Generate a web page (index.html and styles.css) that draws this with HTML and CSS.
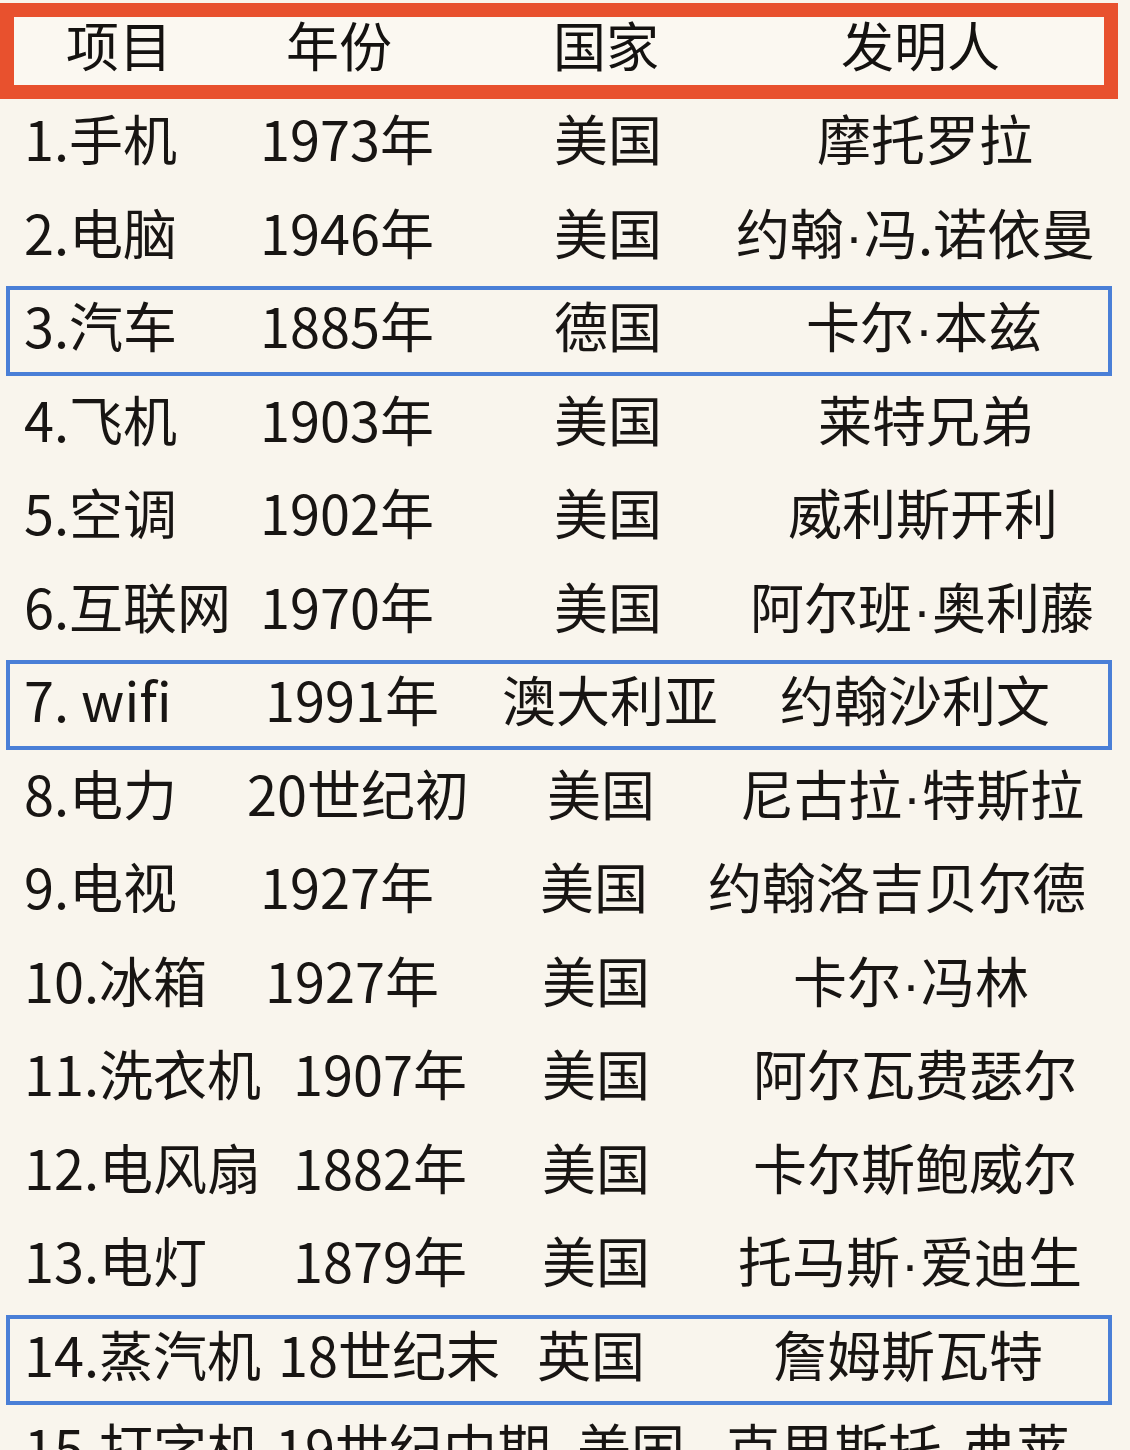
FILE: index.html
```html
<!DOCTYPE html>
<html lang="zh-CN">
<head>
<meta charset="utf-8">
<title>发明表</title>
<link rel="stylesheet" href="styles.css">
</head>
<body>
<div class="sheet">
  <div class="head">
    <span>项目</span><span>年份</span><span>国家</span><span>发明人</span>
  </div>

  <div class="row"><div class="cells v1"><span>1.手机</span><span>1973年</span><span>美国</span><span>摩托罗拉</span></div></div>
  <div class="row"><div class="cells v2"><span>2.电脑</span><span>1946年</span><span>美国</span><span>约翰<i class="dot">·</i>冯.诺依曼</span></div></div>
  <div class="row"><div class="cells v3 mark"><span>3.汽车</span><span>1885年</span><span>德国</span><span>卡尔<i class="dot">·</i>本兹</span></div></div>
  <div class="row"><div class="cells v4"><span>4.飞机</span><span>1903年</span><span>美国</span><span>莱特兄弟</span></div></div>
  <div class="row"><div class="cells v5"><span>5.空调</span><span>1902年</span><span>美国</span><span>威利斯开利</span></div></div>
  <div class="row"><div class="cells v6"><span>6.互联网</span><span>1970年</span><span>美国</span><span>阿尔班<i class="dot">·</i>奥利藤</span></div></div>
  <div class="row"><div class="cells v7 mark"><span>7. wifi</span><span>1991年</span><span>澳大利亚</span><span>约翰沙利文</span></div></div>
  <div class="row"><div class="cells v8"><span>8.电力</span><span>20世纪初</span><span>美国</span><span>尼古拉<i class="dot">·</i>特斯拉</span></div></div>
  <div class="row"><div class="cells v9"><span>9.电视</span><span>1927年</span><span>美国</span><span>约翰洛吉贝尔德</span></div></div>
  <div class="row"><div class="cells v10"><span>10.冰箱</span><span>1927年</span><span>美国</span><span>卡尔<i class="dot">·</i>冯林</span></div></div>
  <div class="row"><div class="cells v11"><span>11.洗衣机</span><span>1907年</span><span>美国</span><span>阿尔瓦费瑟尔</span></div></div>
  <div class="row"><div class="cells v11"><span>12.电风扇</span><span>1882年</span><span>美国</span><span>卡尔斯鲍威尔</span></div></div>
  <div class="row"><div class="cells v13"><span>13.电灯</span><span>1879年</span><span>美国</span><span>托马斯<i class="dot">·</i>爱迪生</span></div></div>
  <div class="row"><div class="cells v14 mark"><span>14.蒸汽机</span><span>18世纪末</span><span>英国</span><span>詹姆斯瓦特</span></div></div>
  <div class="row"><div class="cells v15"><span>15.打字机</span><span>19世纪中期</span><span>美国</span><span>克里斯托<i class="dot">·</i>弗莱</span></div></div>
</div>
</body>
</html>
```

FILE: styles.css
```css
html, body {
  margin: 0;
  padding: 0;
  background: #f9f5ed;
}

body {
  font-family: "Noto Sans CJK SC", "Noto Sans", sans-serif;
  color: #181513;
  overflow: hidden;
}

.sheet {
  width: 1130px;
  padding-top: 3px;
}

.head {
  box-sizing: border-box;
  width: 1118px;
  height: 96px;
  border: 14px solid #e8512e;
  background: #fbf8f1;
  display: grid;
  grid-template-columns: 220px 267px 288px 1fr;
  padding-left: 52px;
  font-size: 53px;
  line-height: 55px;
  color: #141210;
  white-space: nowrap;
}

.row {
  height: 93.5px;
}

.cells {
  box-sizing: border-box;
  margin-left: 6px;
  width: 1106px;
  height: 90px;
  border: 4px solid transparent;
  padding-left: 14px;
  display: grid;
  grid-template-columns: var(--c1) var(--c2) var(--c3) 1fr;
  font-size: 54px;
  line-height: 70px;
  white-space: nowrap;
}

.dot {
  font-style: normal;
  font-family: "Liberation Sans", sans-serif;
  padding: 0 1px;
}

.mark {
  border-color: #4a7fd7;
}

.v1  { --c1: 236px; --c2: 294px; --c3: 263px; }
.v2  { --c1: 236px; --c2: 294px; --c3: 182px; }
.v3  { --c1: 236px; --c2: 294px; --c3: 252px; }
.v4  { --c1: 236px; --c2: 294px; --c3: 264px; }
.v5  { --c1: 236px; --c2: 294px; --c3: 234px; }
.v6  { --c1: 236px; --c2: 294px; --c3: 196px; }
.v7  { --c1: 241px; --c2: 237px; --c3: 278px; }
.v8  { --c1: 223px; --c2: 300px; --c3: 193px; }
.v9  { --c1: 236px; --c2: 280px; --c3: 168px; }
.v10 { --c1: 241px; --c2: 277px; --c3: 251px; }
.v11 { --c1: 269px; --c2: 249px; --c3: 211px; }
.v13 { --c1: 269px; --c2: 249px; --c3: 196px; }
.v14 { --c1: 254px; --c2: 259px; --c3: 236px; }
.v15 { --c1: 251px; --c2: 302px; --c3: 149px; }
```
